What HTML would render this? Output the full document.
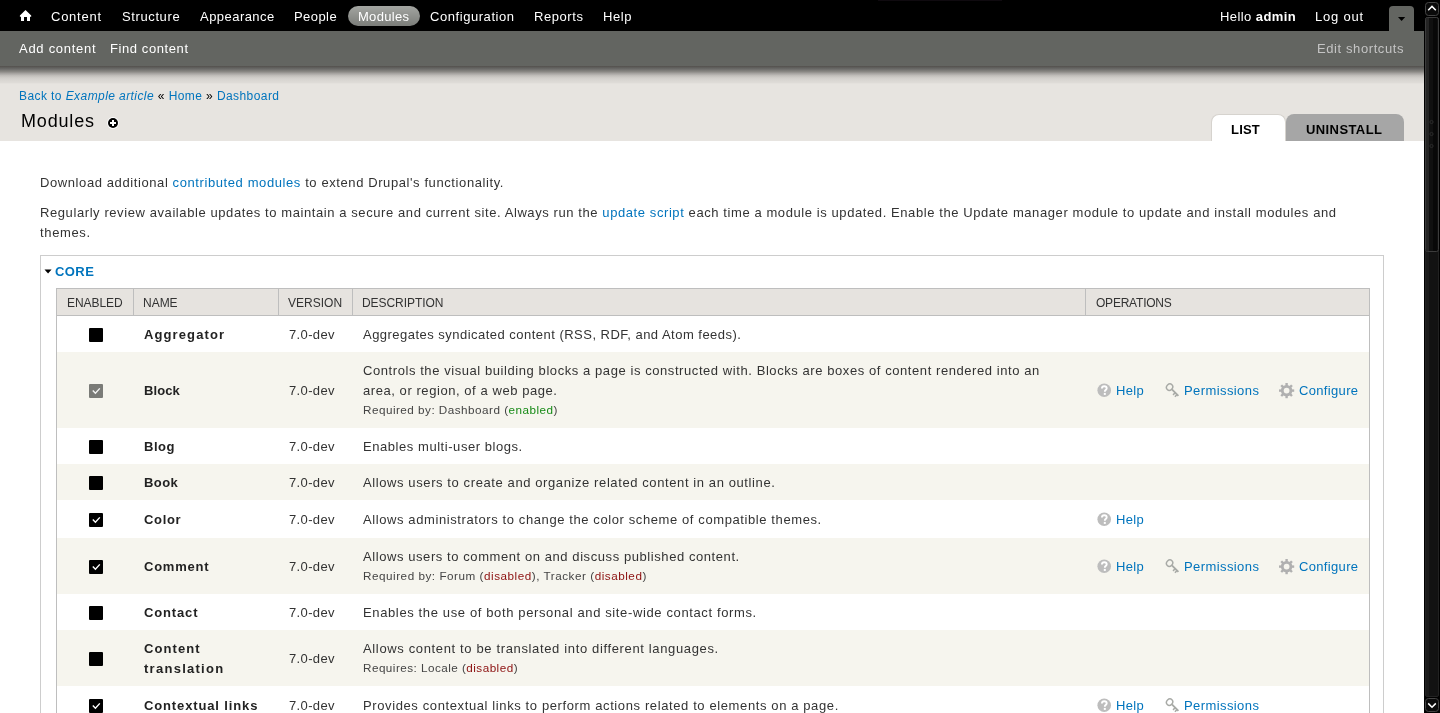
<!DOCTYPE html>
<html><head><meta charset="utf-8"><title>Modules</title><style>
*{margin:0;padding:0;box-sizing:border-box}
html,body{width:1440px;height:713px;overflow:hidden;background:#fff;font-family:"Liberation Sans",sans-serif}
.t{position:absolute;white-space:nowrap;line-height:20px;z-index:5;will-change:transform}
.t a{color:#0074bd}
.t .k{color:#000}
.ok{color:#168a16}
.bad{color:#8c1010}
#tb{position:absolute;left:0;top:0;width:1424px;height:31px;background:#000;z-index:3}
#sc{position:absolute;left:0;top:31px;width:1424px;height:35px;background:#636561;z-index:2}
#shadow{position:absolute;left:0;top:66px;width:1424px;height:19px;z-index:2;background:linear-gradient(#53504d 0px,#5f5e5b 1.5px,#6b6b69 3px,#8a8884 5.7px,#a6a3a0 7.5px,#c2bfbb 9.7px,#d2cfcb 12px,#d9d6d2 14.2px,#dedbd7 16.5px,#e7e4e0 18px)}
#brand{position:absolute;left:0;top:66px;width:1424px;height:75px;background:#e7e4e0;z-index:1}
#pill{position:absolute;left:348px;top:6px;width:72px;height:20px;border-radius:10px;background:linear-gradient(#a3a5a1,#7b7d79);z-index:4}
#toggle{position:absolute;left:1389px;top:6px;width:25px;height:26px;border-radius:4px 4px 0 0;background:#636561;z-index:4}
.tab{position:absolute;top:114px;height:27px;border-radius:8px 8px 0 0;z-index:4}
#fs{position:absolute;left:40px;top:255px;width:1344px;height:600px;border:1px solid #cdcdcd;border-bottom:none}
#thead{position:absolute;left:56px;top:288px;width:1314px;height:28px;background:#e6e3df;border:1px solid #bebebe;z-index:2}
.sep{position:absolute;top:289px;width:1px;height:26px;background:#bebebe;z-index:3}
#tbl{position:absolute;left:56px;top:316px;width:1314px;height:420px;border-left:1px solid #bebebe;border-right:1px solid #bebebe;z-index:3}
.row{position:absolute;left:57px;width:1312px}
.cb{position:absolute;left:89px;width:14px;height:14px;background:#000;border-radius:1px;z-index:4}
.cb svg{display:block}
.cb.dis{background:#7a7b77}
.ic{position:absolute;z-index:4}
#sb{position:absolute;left:1424px;top:0;width:16px;height:713px;background:#000;z-index:10}
</style></head>
<body>

<div id="tb"></div>
<div style="position:absolute;left:878px;top:0;width:124px;height:1px;background:#0f0a0f;z-index:4"></div>
<div id="sc"></div>
<div id="brand"></div>
<div id="shadow"></div>
<div id="pill"></div>
<div id="toggle"><svg width="25" height="26" style="display:block"><path d="M9 11 L16.2 11 L12.6 15 Z" fill="#000"/></svg></div>
<svg style="position:absolute;left:19px;top:9px;z-index:4" width="14" height="14" viewBox="0 0 14 14"><path d="M6.5 1 L12.2 6.4 L12.2 7.8 L11 7.8 L11 12 L8 12 L8 8 L5 8 L5 12 L2 12 L2 7.8 L0.9 7.8 L0.9 6.4 Z" fill="#fff"/></svg>
<svg style="position:absolute;left:106px;top:116px;z-index:4" width="14" height="14" viewBox="0 0 14 14"><circle cx="7" cy="7" r="5.9" fill="#fff"/><circle cx="7" cy="7" r="5" fill="#000"/><rect x="6" y="4" width="2" height="6" fill="#fff"/><rect x="4" y="6" width="6" height="2" fill="#fff"/></svg>
<div class="tab" style="left:1211px;width:75px;background:#fff;border:1px solid #d6d3ce;border-bottom:none"></div>
<div class="tab" style="left:1286px;width:118px;background:#a6a6a6"></div>
<div id="fs"></div>
<svg style="position:absolute;left:44px;top:269px" width="9" height="6"><path d="M0.5 0.6 L7.6 0.6 L4.05 4.6 Z" fill="#000"/></svg>
<div id="thead"></div>
<div class="sep" style="left:133px"></div>
<div class="sep" style="left:278px"></div>
<div class="sep" style="left:352px"></div>
<div class="sep" style="left:1085px"></div>
<div id="tbl"></div>
<svg id="sb" width="16" height="713" viewBox="0 0 16 713">
<rect x="0" y="0" width="16" height="713" fill="#000"/>
<rect x="1.5" y="17.5" width="13" height="679" rx="1.5" fill="#121212" stroke="#222" stroke-width="1"/>
<rect x="2" y="18" width="3" height="678" fill="#1a1a1a"/>
<rect x="1.5" y="17.5" width="13" height="234" rx="2" fill="#101010" stroke="#3c3c3c" stroke-width="1"/>
<rect x="2" y="18" width="3" height="233" fill="#242424"/>
<rect x="9" y="18" width="4" height="233" fill="#080808"/>
<circle cx="7.5" cy="122" r="1.6" fill="none" stroke="#2e2e2e" stroke-width="0.9"/>
<circle cx="7.5" cy="134" r="1.6" fill="none" stroke="#2e2e2e" stroke-width="0.9"/>
<circle cx="7.5" cy="146" r="1.6" fill="none" stroke="#2e2e2e" stroke-width="0.9"/>
<rect x="1.5" y="2.5" width="13" height="13" rx="3" fill="#0a0a0a" stroke="#444" stroke-width="1"/>
<path d="M4.2 10.2 L8 6.4 L11.8 10.2" stroke="#fff" stroke-width="1.5" fill="none"/>
<rect x="1.5" y="698.5" width="13" height="13" rx="3" fill="#0a0a0a" stroke="#444" stroke-width="1"/>
<path d="M4.2 703.4 L8 707.2 L11.8 703.4" stroke="#fff" stroke-width="1.5" fill="none"/>
</svg>

<div class="row" style="top:316px;height:36px;background:#fff"></div><div class="cb" style="top:328px"></div><div class="row" style="top:352px;height:76px;background:#f6f5ee"></div><div class="cb dis" style="top:384px"><svg width="14" height="14"><path d="M3.8 6.6 L6.4 9.2 L10.8 4.4" stroke="#f4f4f4" stroke-width="1.4" fill="none"/></svg></div><svg class="ic" style="left:1097px;top:383.0px" width="15" height="15" viewBox="0 0 15 15"><circle cx="7.2" cy="7.3" r="6.8" fill="#bdbdbd"/><path d="M4.9 5.6 C4.9 3.9 6 3.2 7.3 3.2 C8.7 3.2 9.7 4 9.7 5.3 C9.7 6.7 8.2 7 7.9 8 L7.9 8.7" stroke="#fff" stroke-width="1.9" fill="none"/><rect x="6.8" y="9.9" width="2" height="2" fill="#fff"/></svg><svg class="ic" style="left:1164px;top:381.6px" width="17" height="17" viewBox="0 0 17 17"><ellipse cx="5.6" cy="5.1" rx="3.3" ry="2.9" transform="rotate(-45 5.6 5.1)" stroke="#a8aaa6" stroke-width="1.45" fill="none"/><path d="M7.9 7.4 L14.4 13.9" stroke="#a8aaa6" stroke-width="1.9"/><path d="M11.2 10.8 L9 12.9 M13 12.6 L10.9 14.7" stroke="#a8aaa6" stroke-width="1.5"/></svg><svg class="ic" style="left:1279px;top:383.2px" width="16" height="16" viewBox="0 0 16 16"><rect x="6.4" y="0" width="2.4" height="3.4" transform="rotate(0 7.6 7.6)" fill="#b0b0b0"/><rect x="6.4" y="0" width="2.4" height="3.4" transform="rotate(45 7.6 7.6)" fill="#b0b0b0"/><rect x="6.4" y="0" width="2.4" height="3.4" transform="rotate(90 7.6 7.6)" fill="#b0b0b0"/><rect x="6.4" y="0" width="2.4" height="3.4" transform="rotate(135 7.6 7.6)" fill="#b0b0b0"/><rect x="6.4" y="0" width="2.4" height="3.4" transform="rotate(180 7.6 7.6)" fill="#b0b0b0"/><rect x="6.4" y="0" width="2.4" height="3.4" transform="rotate(225 7.6 7.6)" fill="#b0b0b0"/><rect x="6.4" y="0" width="2.4" height="3.4" transform="rotate(270 7.6 7.6)" fill="#b0b0b0"/><rect x="6.4" y="0" width="2.4" height="3.4" transform="rotate(315 7.6 7.6)" fill="#b0b0b0"/><circle cx="7.6" cy="7.6" r="4.3" stroke="#b0b0b0" stroke-width="2.8" fill="none"/></svg><div class="row" style="top:428px;height:36px;background:#fff"></div><div class="cb" style="top:440px"></div><div class="row" style="top:464px;height:36px;background:#f6f5ee"></div><div class="cb" style="top:476px"></div><div class="row" style="top:500px;height:38px;background:#fff"></div><div class="cb" style="top:513px"><svg width="14" height="14"><path d="M3.8 6.6 L6.4 9.2 L10.8 4.4" stroke="#fff" stroke-width="1.4" fill="none"/></svg></div><svg class="ic" style="left:1097px;top:512.0px" width="15" height="15" viewBox="0 0 15 15"><circle cx="7.2" cy="7.3" r="6.8" fill="#bdbdbd"/><path d="M4.9 5.6 C4.9 3.9 6 3.2 7.3 3.2 C8.7 3.2 9.7 4 9.7 5.3 C9.7 6.7 8.2 7 7.9 8 L7.9 8.7" stroke="#fff" stroke-width="1.9" fill="none"/><rect x="6.8" y="9.9" width="2" height="2" fill="#fff"/></svg><div class="row" style="top:538px;height:56px;background:#f6f5ee"></div><div class="cb" style="top:560px"><svg width="14" height="14"><path d="M3.8 6.6 L6.4 9.2 L10.8 4.4" stroke="#fff" stroke-width="1.4" fill="none"/></svg></div><svg class="ic" style="left:1097px;top:559.0px" width="15" height="15" viewBox="0 0 15 15"><circle cx="7.2" cy="7.3" r="6.8" fill="#bdbdbd"/><path d="M4.9 5.6 C4.9 3.9 6 3.2 7.3 3.2 C8.7 3.2 9.7 4 9.7 5.3 C9.7 6.7 8.2 7 7.9 8 L7.9 8.7" stroke="#fff" stroke-width="1.9" fill="none"/><rect x="6.8" y="9.9" width="2" height="2" fill="#fff"/></svg><svg class="ic" style="left:1164px;top:557.6px" width="17" height="17" viewBox="0 0 17 17"><ellipse cx="5.6" cy="5.1" rx="3.3" ry="2.9" transform="rotate(-45 5.6 5.1)" stroke="#a8aaa6" stroke-width="1.45" fill="none"/><path d="M7.9 7.4 L14.4 13.9" stroke="#a8aaa6" stroke-width="1.9"/><path d="M11.2 10.8 L9 12.9 M13 12.6 L10.9 14.7" stroke="#a8aaa6" stroke-width="1.5"/></svg><svg class="ic" style="left:1279px;top:559.2px" width="16" height="16" viewBox="0 0 16 16"><rect x="6.4" y="0" width="2.4" height="3.4" transform="rotate(0 7.6 7.6)" fill="#b0b0b0"/><rect x="6.4" y="0" width="2.4" height="3.4" transform="rotate(45 7.6 7.6)" fill="#b0b0b0"/><rect x="6.4" y="0" width="2.4" height="3.4" transform="rotate(90 7.6 7.6)" fill="#b0b0b0"/><rect x="6.4" y="0" width="2.4" height="3.4" transform="rotate(135 7.6 7.6)" fill="#b0b0b0"/><rect x="6.4" y="0" width="2.4" height="3.4" transform="rotate(180 7.6 7.6)" fill="#b0b0b0"/><rect x="6.4" y="0" width="2.4" height="3.4" transform="rotate(225 7.6 7.6)" fill="#b0b0b0"/><rect x="6.4" y="0" width="2.4" height="3.4" transform="rotate(270 7.6 7.6)" fill="#b0b0b0"/><rect x="6.4" y="0" width="2.4" height="3.4" transform="rotate(315 7.6 7.6)" fill="#b0b0b0"/><circle cx="7.6" cy="7.6" r="4.3" stroke="#b0b0b0" stroke-width="2.8" fill="none"/></svg><div class="row" style="top:594px;height:36px;background:#fff"></div><div class="cb" style="top:606px"></div><div class="row" style="top:630px;height:56px;background:#f6f5ee"></div><div class="cb" style="top:652px"></div><div class="row" style="top:686px;height:38px;background:#fff"></div><div class="cb" style="top:699px"><svg width="14" height="14"><path d="M3.8 6.6 L6.4 9.2 L10.8 4.4" stroke="#fff" stroke-width="1.4" fill="none"/></svg></div><svg class="ic" style="left:1097px;top:698.0px" width="15" height="15" viewBox="0 0 15 15"><circle cx="7.2" cy="7.3" r="6.8" fill="#bdbdbd"/><path d="M4.9 5.6 C4.9 3.9 6 3.2 7.3 3.2 C8.7 3.2 9.7 4 9.7 5.3 C9.7 6.7 8.2 7 7.9 8 L7.9 8.7" stroke="#fff" stroke-width="1.9" fill="none"/><rect x="6.8" y="9.9" width="2" height="2" fill="#fff"/></svg><svg class="ic" style="left:1164px;top:696.6px" width="17" height="17" viewBox="0 0 17 17"><ellipse cx="5.6" cy="5.1" rx="3.3" ry="2.9" transform="rotate(-45 5.6 5.1)" stroke="#a8aaa6" stroke-width="1.45" fill="none"/><path d="M7.9 7.4 L14.4 13.9" stroke="#a8aaa6" stroke-width="1.9"/><path d="M11.2 10.8 L9 12.9 M13 12.6 L10.9 14.7" stroke="#a8aaa6" stroke-width="1.5"/></svg>
<div class="t" id="tb1" style="left:50.80px;top:7px;font-size:13px;font-weight:normal;color:#fff;letter-spacing:0.747px;">Content</div><div class="t" id="tb2" style="left:121.50px;top:7px;font-size:13px;font-weight:normal;color:#fff;letter-spacing:0.611px;">Structure</div><div class="t" id="tb3" style="left:200.00px;top:7px;font-size:13px;font-weight:normal;color:#fff;letter-spacing:0.458px;">Appearance</div><div class="t" id="tb4" style="left:294.30px;top:7px;font-size:13px;font-weight:normal;color:#fff;letter-spacing:0.430px;">People</div><div class="t" id="tb5" style="left:357.60px;top:7px;font-size:13px;font-weight:normal;color:#fff;letter-spacing:0.294px;">Modules</div><div class="t" id="tb6" style="left:429.80px;top:7px;font-size:13px;font-weight:normal;color:#fff;letter-spacing:0.559px;">Configuration</div><div class="t" id="tb7" style="left:534.30px;top:7px;font-size:13px;font-weight:normal;color:#fff;letter-spacing:0.563px;">Reports</div><div class="t" id="tb8" style="left:603.20px;top:7px;font-size:13px;font-weight:normal;color:#fff;letter-spacing:0.565px;">Help</div><div class="t" id="tb9" style="left:1220.40px;top:7px;font-size:13px;font-weight:normal;color:#fff;letter-spacing:0.429px;">Hello <b>admin</b></div><div class="t" id="tb10" style="left:1315.40px;top:7px;font-size:13px;font-weight:normal;color:#fff;letter-spacing:0.806px;">Log out</div><div class="t" id="sc1" style="left:18.90px;top:39px;font-size:13px;font-weight:normal;color:#fff;letter-spacing:0.723px;">Add content</div><div class="t" id="sc2" style="left:110.30px;top:39px;font-size:13px;font-weight:normal;color:#fff;letter-spacing:0.588px;">Find content</div><div class="t" id="sc3" style="left:1316.50px;top:39px;font-size:13px;font-weight:normal;color:#c4c4c4;letter-spacing:0.596px;">Edit shortcuts</div><div class="t" id="bc" style="left:19.40px;top:86px;font-size:12px;font-weight:normal;color:#0074bd;letter-spacing:0.417px;"><a>Back to <i>Example article</i></a> <span class=k>&laquo;</span> <a>Home</a> <span class=k>&raquo;</span> <a>Dashboard</a></div><div class="t" id="title" style="left:20.50px;top:111px;font-size:18px;font-weight:normal;color:#000;letter-spacing:0.827px;">Modules</div><div class="t" id="tab1" style="left:1231.40px;top:120px;font-size:13px;font-weight:bold;color:#000;letter-spacing:0.192px;">LIST</div><div class="t" id="tab2" style="left:1306.30px;top:120px;font-size:13px;font-weight:bold;color:#000;letter-spacing:0.406px;">UNINSTALL</div><div class="t" id="p1" style="left:39.90px;top:173px;font-size:13px;font-weight:normal;color:#333;letter-spacing:0.594px;">Download additional <a>contributed modules</a> to extend Drupal's functionality.</div><div class="t" id="p2a" style="left:39.50px;top:203px;font-size:13px;font-weight:normal;color:#333;letter-spacing:0.586px;">Regularly review available updates to maintain a secure and current site. Always run the <a>update script</a> each time a module is updated. Enable the Update manager module to update and install modules and</div><div class="t" id="p2b" style="left:39.50px;top:223px;font-size:13px;font-weight:normal;color:#333;letter-spacing:0.645px;">themes.</div><div class="t" id="core" style="left:54.90px;top:262px;font-size:13px;font-weight:bold;color:#0074bd;letter-spacing:0.437px;">CORE</div><div class="t" id="h1" style="left:66.50px;top:293px;font-size:12px;font-weight:normal;color:#333;letter-spacing:-0.059px;">ENABLED</div><div class="t" id="h2" style="left:143.40px;top:293px;font-size:12px;font-weight:normal;color:#333;letter-spacing:-0.022px;">NAME</div><div class="t" id="h3" style="left:288.40px;top:293px;font-size:12px;font-weight:normal;color:#333;letter-spacing:0.009px;">VERSION</div><div class="t" id="h4" style="left:362.30px;top:293px;font-size:12px;font-weight:normal;color:#333;letter-spacing:-0.054px;">DESCRIPTION</div><div class="t" id="h5" style="left:1095.80px;top:293px;font-size:12px;font-weight:normal;color:#333;letter-spacing:-0.221px;">OPERATIONS</div><div class="t" id="n0" style="left:144.40px;top:325px;font-size:13px;font-weight:bold;color:#222;letter-spacing:1.111px;">Aggregator</div><div class="t" id="v0" style="left:288.80px;top:325px;font-size:13px;font-weight:normal;color:#333;letter-spacing:0.357px;">7.0-dev</div><div class="t" id="d0_0" style="left:363.20px;top:325px;font-size:13px;font-weight:normal;color:#333;letter-spacing:0.477px;">Aggregates syndicated content (RSS, RDF, and Atom feeds).</div><div class="t" id="n1" style="left:144.40px;top:381px;font-size:13px;font-weight:bold;color:#222;letter-spacing:0.082px;">Block</div><div class="t" id="v1" style="left:288.80px;top:381px;font-size:13px;font-weight:normal;color:#333;letter-spacing:0.357px;">7.0-dev</div><div class="t" id="d1_0" style="left:363.20px;top:361px;font-size:13px;font-weight:normal;color:#333;letter-spacing:0.573px;">Controls the visual building blocks a page is constructed with. Blocks are boxes of content rendered into an</div><div class="t" id="d1_1" style="left:363.20px;top:381px;font-size:13px;font-weight:normal;color:#333;letter-spacing:0.562px;">area, or region, of a web page.</div><div class="t" id="d1_2" style="left:363.20px;top:400px;font-size:11.7px;font-weight:normal;color:#444;letter-spacing:0.489px;">Required by: Dashboard (<span class=ok>enabled</span>)</div><div class="t" id="oh1" style="left:1115.50px;top:381px;font-size:13px;font-weight:normal;color:#0074bd;letter-spacing:0.365px;">Help</div><div class="t" id="op1" style="left:1183.80px;top:381px;font-size:13px;font-weight:normal;color:#0074bd;letter-spacing:0.410px;">Permissions</div><div class="t" id="oc1" style="left:1298.80px;top:381px;font-size:13px;font-weight:normal;color:#0074bd;letter-spacing:0.333px;">Configure</div><div class="t" id="n2" style="left:144.40px;top:437px;font-size:13px;font-weight:bold;color:#222;letter-spacing:0.553px;">Blog</div><div class="t" id="v2" style="left:288.80px;top:437px;font-size:13px;font-weight:normal;color:#333;letter-spacing:0.357px;">7.0-dev</div><div class="t" id="d2_0" style="left:363.20px;top:437px;font-size:13px;font-weight:normal;color:#333;letter-spacing:0.552px;">Enables multi-user blogs.</div><div class="t" id="n3" style="left:144.40px;top:473px;font-size:13px;font-weight:bold;color:#222;letter-spacing:0.443px;">Book</div><div class="t" id="v3" style="left:288.80px;top:473px;font-size:13px;font-weight:normal;color:#333;letter-spacing:0.357px;">7.0-dev</div><div class="t" id="d3_0" style="left:363.20px;top:473px;font-size:13px;font-weight:normal;color:#333;letter-spacing:0.599px;">Allows users to create and organize related content in an outline.</div><div class="t" id="n4" style="left:144.40px;top:510px;font-size:13px;font-weight:bold;color:#222;letter-spacing:0.655px;">Color</div><div class="t" id="v4" style="left:288.80px;top:510px;font-size:13px;font-weight:normal;color:#333;letter-spacing:0.357px;">7.0-dev</div><div class="t" id="d4_0" style="left:363.20px;top:510px;font-size:13px;font-weight:normal;color:#333;letter-spacing:0.598px;">Allows administrators to change the color scheme of compatible themes.</div><div class="t" id="oh4" style="left:1115.50px;top:510px;font-size:13px;font-weight:normal;color:#0074bd;letter-spacing:0.365px;">Help</div><div class="t" id="n5" style="left:144.40px;top:557px;font-size:13px;font-weight:bold;color:#222;letter-spacing:0.764px;">Comment</div><div class="t" id="v5" style="left:288.80px;top:557px;font-size:13px;font-weight:normal;color:#333;letter-spacing:0.357px;">7.0-dev</div><div class="t" id="d5_0" style="left:363.20px;top:547px;font-size:13px;font-weight:normal;color:#333;letter-spacing:0.576px;">Allows users to comment on and discuss published content.</div><div class="t" id="d5_1" style="left:363.20px;top:566px;font-size:11.7px;font-weight:normal;color:#444;letter-spacing:0.529px;">Required by: Forum (<span class=bad>disabled</span>), Tracker (<span class=bad>disabled</span>)</div><div class="t" id="oh5" style="left:1115.50px;top:557px;font-size:13px;font-weight:normal;color:#0074bd;letter-spacing:0.365px;">Help</div><div class="t" id="op5" style="left:1183.80px;top:557px;font-size:13px;font-weight:normal;color:#0074bd;letter-spacing:0.410px;">Permissions</div><div class="t" id="oc5" style="left:1298.80px;top:557px;font-size:13px;font-weight:normal;color:#0074bd;letter-spacing:0.333px;">Configure</div><div class="t" id="n6" style="left:144.40px;top:603px;font-size:13px;font-weight:bold;color:#222;letter-spacing:0.857px;">Contact</div><div class="t" id="v6" style="left:288.80px;top:603px;font-size:13px;font-weight:normal;color:#333;letter-spacing:0.357px;">7.0-dev</div><div class="t" id="d6_0" style="left:363.20px;top:603px;font-size:13px;font-weight:normal;color:#333;letter-spacing:0.628px;">Enables the use of both personal and site-wide contact forms.</div><div class="t" id="n7a" style="left:144.40px;top:639px;font-size:13px;font-weight:bold;color:#222;letter-spacing:1.072px;">Content</div><div class="t" id="n7b" style="left:144.40px;top:659px;font-size:13px;font-weight:bold;color:#222;letter-spacing:1.269px;">translation</div><div class="t" id="v7" style="left:288.80px;top:649px;font-size:13px;font-weight:normal;color:#333;letter-spacing:0.357px;">7.0-dev</div><div class="t" id="d7_0" style="left:363.20px;top:639px;font-size:13px;font-weight:normal;color:#333;letter-spacing:0.643px;">Allows content to be translated into different languages.</div><div class="t" id="d7_1" style="left:363.20px;top:658px;font-size:11.7px;font-weight:normal;color:#444;letter-spacing:0.470px;">Requires: Locale (<span class=bad>disabled</span>)</div><div class="t" id="n8" style="left:144.40px;top:696px;font-size:13px;font-weight:bold;color:#222;letter-spacing:0.868px;">Contextual links</div><div class="t" id="v8" style="left:288.80px;top:696px;font-size:13px;font-weight:normal;color:#333;letter-spacing:0.357px;">7.0-dev</div><div class="t" id="d8_0" style="left:363.20px;top:696px;font-size:13px;font-weight:normal;color:#333;letter-spacing:0.612px;">Provides contextual links to perform actions related to elements on a page.</div><div class="t" id="oh8" style="left:1115.50px;top:696px;font-size:13px;font-weight:normal;color:#0074bd;letter-spacing:0.365px;">Help</div><div class="t" id="op8" style="left:1183.80px;top:696px;font-size:13px;font-weight:normal;color:#0074bd;letter-spacing:0.410px;">Permissions</div>
</body></html>
